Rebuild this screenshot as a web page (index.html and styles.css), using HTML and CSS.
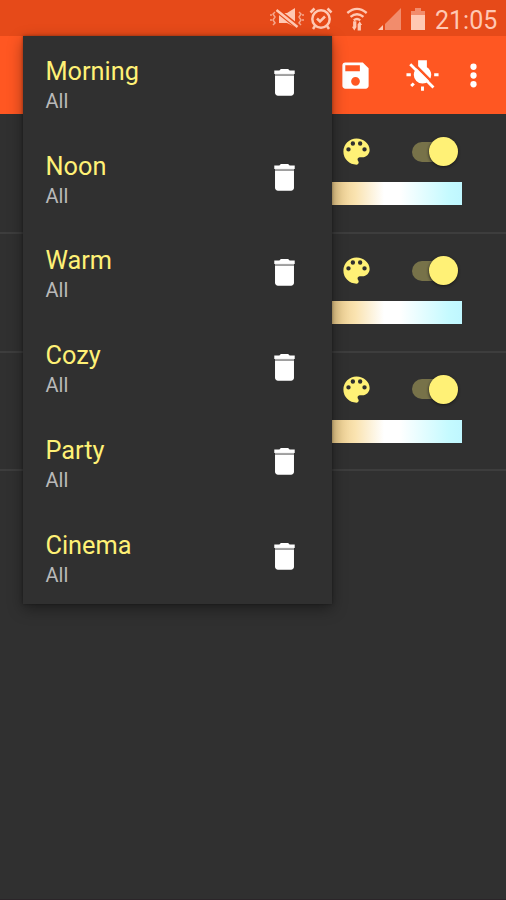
FILE: index.html
```
<!DOCTYPE html>
<html lang="en">
<head>
<meta charset="utf-8">
<title>Scenes</title>
<link rel="stylesheet" href="styles.css">
</head>
<body>
<svg class="defs" width="0" height="0" aria-hidden="true">
  <symbol id="trash" viewBox="0 0 24 24"><path d="M5.500 7.200h13V19c0 1.100-.9 2-2 2h-9c-1.100 0-2-.9-2-2z"/><path d="M19 3.700h-3.500l-1-.9h-5l-1 .9H5v2.400h14z"/><path class="seam" d="M5.500 6.100h13v1.100h-13z"/></symbol>
  <symbol id="palette" viewBox="0 0 24 24"><path d="M12 3a9 9 0 0 0 0 18c.83 0 1.500-.67 1.500-1.500 0-.39-.15-.74-.39-1.010-.23-.26-.38-.61-.38-.99 0-.83.67-1.500 1.500-1.500H16c2.760 0 5-2.240 5-5 0-4.420-4.030-8-9-8zm-5.500 9a1.500 1.500 0 1 1 0-3 1.500 1.500 0 0 1 0 3zm3-4a1.500 1.500 0 1 1 0-3 1.500 1.500 0 0 1 0 3zm5 0a1.500 1.500 0 1 1 0-3 1.500 1.500 0 0 1 0 3zm3 4a1.500 1.500 0 1 1 0-3 1.500 1.500 0 0 1 0 3z"/></symbol>
</svg>
<div class="screen">
  <header class="status">
    <svg class="mute" viewBox="0 0 34 24"><path d="M9 6h8l8-5v19l-8-4H9z"/><path class="cut" d="M6 2.500l22 17.500"/><path class="line" d="M6.500 3l21 17"/><path class="wave" d="M5 5l-2 2 2 3-2 3 2 3-2 2M1 7v2M1 12v2M29 5l2 2-2 3 2 3-2 3 2 2M33 7v2M33 12v2"/></svg>
    <svg class="alarm" viewBox="0 0 24 24"><circle class="line" cx="12" cy="12" r="8.700"/><path class="line" d="M8 11.500l3 3 5-5M1.500 5.500l4-4M22.500 5.500l-4-4M6 19l-2 3M18 19l2 3"/></svg>
    <svg class="wifi" viewBox="0 0 24 26"><path class="line" d="M1.500 6.500q10.500-9 21 0M5 10.800q7-6 14 0M8.500 14.500q3.500-3 7 0"/><path d="M11.300 15.500v6h.3l-2.500 4-2.600-4h1.300v-6zM12.700 25.500v-6h-.3l2.500-4 2.600 4h-1.300v6z"/></svg>
    <svg class="signal" viewBox="0 0 24 24"><path class="faint" d="M23 1v22H7v-6z"/><path d="M5 18v5H0z"/></svg>
    <svg class="battery" viewBox="0 0 16 24"><path class="faint" d="M5 1h6v3h4v5H1V4h4z"/><path d="M1 8h14v15H1z"/></svg>
    <span class="clock">21:05</span>
  </header>
  <nav class="toolbar">
    <svg class="icon save" viewBox="0 0 24 24"><path d="M17 3H5a2 2 0 0 0-2 2v14c0 1.100.89 2 2 2h14c1.100 0 2-.9 2-2V7zm-5 16a3 3 0 1 1 0-6 3 3 0 0 1 0 6zm3-10H5V5h10z"/></svg>
    <svg class="icon lamp" viewBox="0 0 24 24"><path d="M3.550 18.540l1.410 1.410 1.790-1.800-1.410-1.410zM11 22.450h2V19.500h-2zM4 10.500H1v2h3zM15 6.310V1.500H9v4.810C7.210 7.350 6 9.280 6 11.500a6 6 0 0 0 12 0c0-2.220-1.210-4.150-3-5.190zM20 10.500v2h3v-2z"/><path class="slash-gap" d="M4.500 2.400l16 16"/><path class="slash" d="M3.600 4.300l15.900 15.900"/></svg>
    <svg class="icon more" viewBox="0 0 24 24"><circle cx="12" cy="6" r="2.150"/><circle cx="12" cy="12" r="2.150"/><circle cx="12" cy="18" r="2.150"/></svg>
  </nav>
  <main class="lights">
    <section class="light"><div class="controls"><svg class="icon"><use href="#palette"/></svg><span class="switch"></span></div><div class="temperature"></div></section>
    <section class="light"><div class="controls"><svg class="icon"><use href="#palette"/></svg><span class="switch"></span></div><div class="temperature"></div></section>
    <section class="light"><div class="controls"><svg class="icon"><use href="#palette"/></svg><span class="switch"></span></div><div class="temperature"></div></section>
  </main>
  <ul class="menu">
    <li><div><h2>Morning</h2><p>All</p></div><svg class="icon"><use href="#trash"/></svg></li>
    <li><div><h2>Noon</h2><p>All</p></div><svg class="icon"><use href="#trash"/></svg></li>
    <li><div><h2>Warm</h2><p>All</p></div><svg class="icon"><use href="#trash"/></svg></li>
    <li><div><h2>Cozy</h2><p>All</p></div><svg class="icon"><use href="#trash"/></svg></li>
    <li><div><h2>Party</h2><p>All</p></div><svg class="icon"><use href="#trash"/></svg></li>
    <li><div><h2>Cinema</h2><p>All</p></div><svg class="icon"><use href="#trash"/></svg></li>
  </ul>
</div>
</body>
</html>
```
FILE: styles.css
```
* { box-sizing: border-box; }
body { margin: 0; background: #303030; font-family: Roboto, sans-serif; }
h2, p, ul { margin: 0; padding: 0; font-weight: 400; }
.defs { position: absolute; }
.screen { position: relative; height: 900px; overflow: hidden; border-bottom: 1px solid #2b2529; }

.status { display: flex; align-items: center; height: 36px; padding: 2px 10px 0 0; justify-content: flex-end; background: #e64a19; color: #ffc8b3; fill: #ffc8b3; }
.status svg { flex: none; height: 24px; }
.status .line { fill: none; stroke: #ffc8b3; stroke-width: 2.500; }
.status .cut { fill: none; stroke: #e64a19; stroke-width: 5; }
.status .wave { fill: none; stroke: #f5a78c; stroke-width: 1.500; }
.status .faint { fill: #f28c6c; }
.mute { width: 34px; margin-right: 5px; }
.alarm { width: 24px; margin-right: 12px; }
.wifi { width: 24px; margin-right: 9px; }
.signal { width: 24px; margin-right: 8px; }
.battery { width: 16px; margin-right: 9px; }
.clock { width: 61px; padding-top: 3px; font-size: 25px; line-height: 31px; white-space: nowrap; }

.icon { flex: none; width: 35px; height: 35px; fill: #fff; }
.toolbar { display: flex; align-items: center; justify-content: flex-end; height: 78px; padding-right: 15.500px; background: #ff5722; }
.save { margin-right: 32px; }
.lamp { margin-right: 16px; }
.slash, .slash-gap { fill: none; stroke: #fff; stroke-width: 1.900; }
.slash-gap { stroke: #ff5722; stroke-width: 1.700; }

.light { height: 120px; padding: 20px 44px 0 0; border-bottom: 2px solid #3d3d3d; display: flex; flex-direction: column; align-items: flex-end; }
.light:nth-child(n+2) { height: 118.500px; padding-top: 19px; }
.controls { display: flex; align-items: center; height: 35px; padding-right: 4.500px; }
.controls .icon { fill: #fff176; margin-right: 38px; }
.switch { position: relative; width: 46px; height: 20px; border-radius: 10px; background: linear-gradient(90deg, #777249 34px, transparent 34px); }
.switch::after { content: ""; position: absolute; right: 0; top: -4.500px; width: 29px; height: 29px; border-radius: 50%; background: #fff176; box-shadow: 0 1px 3px #181818; }
.temperature { width: 260px; height: 23px; margin-top: 13px; background: linear-gradient(90deg, #ffb030 0%, #e8c887 50%, #fae3b0 59%, #fff 70%, #fff 76%, #c5faff 95%, #bff7ff 100%); }

.menu { position: absolute; left: 23px; top: 36px; width: 309px; height: 568px; background: #303030; list-style: none; box-shadow: 0 5px 14px rgba(0,0,0,.38), 0 0 3px rgba(0,0,0,.35); }
.menu li { display: flex; justify-content: space-between; align-items: center; height: 94.750px; padding: 0 30px 0 22.500px; }
.menu h2 { padding-top: 4px; color: #fff176; font-size: 25.300px; line-height: 32px; }
.menu p { color: #b9b9b9; font-size: 20px; line-height: 27px; }
.menu .icon { margin-bottom: 1px; }
.seam { fill: #a5a5a5; }
```
